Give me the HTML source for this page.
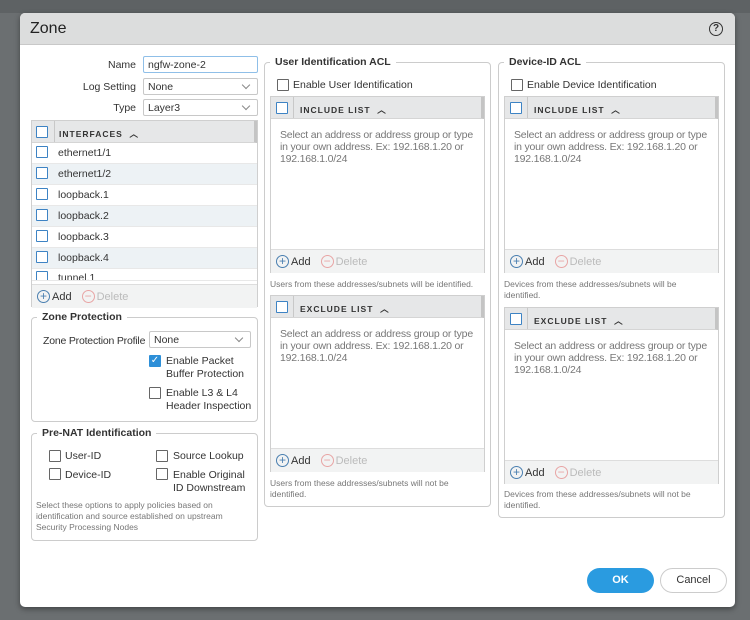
<!DOCTYPE html>
<html><head><meta charset="utf-8"><style>
*{box-sizing:border-box;margin:0;padding:0}
body{width:750px;height:620px;background:#6b6f71;font-family:"Liberation Sans",sans-serif;font-size:10.5px;color:#333;position:relative;overflow:hidden}
.a{position:absolute}
#dlg{left:20px;top:13px;width:715px;height:594px;background:#fff;border-radius:5px;overflow:hidden;box-shadow:0 2px 6px rgba(0,0,0,.4)}
#hd{left:0;top:0;width:715px;height:32px;background:#dcdddd;border-bottom:1px solid #c8c8c8}
.lbl{text-align:right;width:100px}
.inp{border:1px solid #c8c8c8;border-radius:2px;height:17px;padding:2px 4px;background:#fff}
.sel:after{content:"";position:absolute;right:8px;top:3px;width:5px;height:5px;border-right:1px solid #888;border-bottom:1px solid #888;transform:rotate(45deg)}
.cb{width:12px;height:12px;border:1.5px solid #3d83c4;border-radius:1px;background:#fff}
.cg{width:12px;height:12px;border:1px solid #666;border-radius:1px;background:#fff}
.tbl{border:1px solid #cfcfcf;background:#fff}
.th{background:#e6e7e8;height:22px;border-bottom:1px solid #d5d5d5;border-right:3px solid #c4c4c4;font-weight:bold;font-size:8.5px;letter-spacing:1px;color:#333}
.th .sep{position:absolute;left:22px;top:0;bottom:0;border-left:1px solid #c8c8c8}
.ft{background:#f2f3f3;border-top:1px solid #ddd;height:24px;font-size:11px;display:flex;align-items:center;padding-left:5px}
.ft .d{margin-left:10px;color:#bbb;display:flex;align-items:center}
.plus,.minus{display:inline-block;width:13px;height:13px;border:1px solid #4a7fb0;border-radius:50%;text-align:center;line-height:11px;font-size:12px;color:#4a7fb0;margin-right:2px}
.minus{border-color:#e8a5a5;color:#e8a5a5}
.fs{border:1px solid #ccc;border-radius:4px}
.lg{background:#fff;padding:0 5px;font-weight:bold;font-size:10.5px;color:#333}
.ph{color:#777;font-size:10.5px;line-height:12px;letter-spacing:-0.2px}
.note{color:#777;font-size:8.5px;line-height:11px}
.row{height:21px;border-bottom:1px solid #e8e8e8;line-height:20px;font-size:10.5px}
.alt{background:#edf2f5}
</style></head><body>
<div class="a" style="left:0;top:0;width:750px;height:13px;background:#5e6264"></div>
<div id="dlg" class="a">
<div id="hd" class="a"><div class="a" style="left:10px;top:7px;font-size:16px;color:#222">Zone</div>
<div class="a" style="left:689px;top:9px;width:14px;height:14px;border:1.5px solid #333;border-radius:50%;text-align:center;font-size:10px;line-height:11px;font-weight:bold">?</div></div>

<div class="a lbl" style="left:16px;top:46px">Name</div>
<div class="a inp" style="left:123px;top:43px;width:115px;border-color:#8fbfe8">ngfw-zone-2</div>
<div class="a lbl" style="left:16px;top:68px">Log Setting</div>
<div class="a inp sel" style="left:123px;top:65px;width:115px">None</div>
<div class="a lbl" style="left:16px;top:89px">Type</div>
<div class="a inp sel" style="left:123px;top:86px;width:115px">Layer3</div>

<div class="a tbl" style="left:11px;top:107px;width:227px;height:187px">
 <div class="a th" style="left:0;top:0;width:225px"><div class="a cb" style="left:4px;top:5px"></div><div class="sep"></div><div class="a" style="left:27px;top:7px">INTERFACES &nbsp;︿</div></div>
 <div class="a" style="left:0;top:22px;width:225px">
  <div class="row"><span class="cb" style="display:inline-block;margin:0 10px -2px 4px"></span>ethernet1/1</div>
  <div class="row alt"><span class="cb" style="display:inline-block;margin:0 10px -2px 4px"></span>ethernet1/2</div>
  <div class="row"><span class="cb" style="display:inline-block;margin:0 10px -2px 4px"></span>loopback.1</div>
  <div class="row alt"><span class="cb" style="display:inline-block;margin:0 10px -2px 4px"></span>loopback.2</div>
  <div class="row"><span class="cb" style="display:inline-block;margin:0 10px -2px 4px"></span>loopback.3</div>
  <div class="row alt"><span class="cb" style="display:inline-block;margin:0 10px -2px 4px"></span>loopback.4</div>
  <div class="row" style="height:12px;overflow:hidden;line-height:18px"><span class="cb" style="display:inline-block;margin:0 10px -2px 4px"></span>tunnel.1</div>
 </div>
 <div class="a ft" style="left:0;top:163px;width:225px"><span class="plus">+</span>Add<span class="d"><span class="minus">−</span>Delete</span></div>
</div>

<div class="a fs" style="left:11px;top:304px;width:227px;height:105px"></div>
<div class="a lg" style="left:17px;top:298px">Zone Protection</div>
<div class="a" style="left:23px;top:322px;letter-spacing:-0.2px">Zone Protection Profile</div>
<div class="a inp sel" style="left:129px;top:318px;width:102px">None</div>
<div class="a" style="left:129px;top:342px;width:12px;height:12px;background:#2d8fd8;border-radius:1px;color:#fff;font-size:10px;line-height:12px;text-align:center">✓</div>
<div class="a" style="left:146px;top:342px;line-height:13px">Enable Packet<br>Buffer Protection</div>
<div class="a cg" style="left:129px;top:374px"></div>
<div class="a" style="left:146px;top:374px;line-height:13px">Enable L3 &amp; L4<br>Header Inspection</div>

<div class="a fs" style="left:11px;top:420px;width:227px;height:108px"></div>
<div class="a lg" style="left:17px;top:414px">Pre-NAT Identification</div>
<div class="a cg" style="left:29px;top:437px"></div><div class="a" style="left:45px;top:437px">User-ID</div>
<div class="a cg" style="left:29px;top:455px"></div><div class="a" style="left:45px;top:456px">Device-ID</div>
<div class="a cg" style="left:136px;top:437px"></div><div class="a" style="left:153px;top:437px">Source Lookup</div>
<div class="a cg" style="left:136px;top:455px"></div><div class="a" style="left:153px;top:456px;line-height:13px">Enable Original<br>ID Downstream</div>
<div class="a note" style="left:16px;top:487px;width:215px">Select these options to apply policies based on identification and source established on upstream Security Processing Nodes</div>

<!-- User ID ACL -->
<div class="a fs" style="left:244px;top:49px;width:227px;height:445px"></div>
<div class="a lg" style="left:250px;top:43px">User Identification ACL</div>
<div class="a cg" style="left:257px;top:66px"></div><div class="a" style="left:273px;top:66px">Enable User Identification</div>
<div class="a tbl" style="left:250px;top:83px;width:215px;height:177px">
 <div class="a th" style="left:0;top:0;width:213px"><div class="a cb" style="left:5px;top:5px"></div><div class="sep"></div><div class="a" style="left:29px;top:7px">INCLUDE LIST &nbsp;︿</div></div>
 <div class="a ph" style="left:9px;top:32px;width:205px">Select an address or address group or type<br>in your own address. Ex: 192.168.1.20 or<br>192.168.1.0/24</div>
 <div class="a ft" style="left:0;top:152px;width:213px"><span class="plus">+</span>Add<span class="d"><span class="minus">−</span>Delete</span></div>
</div>
<div class="a note" style="left:250px;top:266px">Users from these addresses/subnets will be identified.</div>
<div class="a tbl" style="left:250px;top:282px;width:215px;height:177px">
 <div class="a th" style="left:0;top:0;width:213px"><div class="a cb" style="left:5px;top:5px"></div><div class="sep"></div><div class="a" style="left:29px;top:7px">EXCLUDE LIST &nbsp;︿</div></div>
 <div class="a ph" style="left:9px;top:32px;width:205px">Select an address or address group or type<br>in your own address. Ex: 192.168.1.20 or<br>192.168.1.0/24</div>
 <div class="a ft" style="left:0;top:152px;width:213px"><span class="plus">+</span>Add<span class="d"><span class="minus">−</span>Delete</span></div>
</div>
<div class="a note" style="left:250px;top:465px;width:210px">Users from these addresses/subnets will not be identified.</div>

<!-- Device ID ACL -->
<div class="a fs" style="left:478px;top:49px;width:227px;height:456px"></div>
<div class="a lg" style="left:484px;top:43px">Device-ID ACL</div>
<div class="a cg" style="left:491px;top:66px"></div><div class="a" style="left:507px;top:66px">Enable Device Identification</div>
<div class="a tbl" style="left:484px;top:83px;width:215px;height:177px">
 <div class="a th" style="left:0;top:0;width:213px"><div class="a cb" style="left:5px;top:5px"></div><div class="sep"></div><div class="a" style="left:29px;top:7px">INCLUDE LIST &nbsp;︿</div></div>
 <div class="a ph" style="left:9px;top:32px;width:205px">Select an address or address group or type<br>in your own address. Ex: 192.168.1.20 or<br>192.168.1.0/24</div>
 <div class="a ft" style="left:0;top:152px;width:213px"><span class="plus">+</span>Add<span class="d"><span class="minus">−</span>Delete</span></div>
</div>
<div class="a note" style="left:484px;top:266px;width:210px">Devices from these addresses/subnets will be identified.</div>
<div class="a tbl" style="left:484px;top:294px;width:215px;height:177px">
 <div class="a th" style="left:0;top:0;width:213px"><div class="a cb" style="left:5px;top:5px"></div><div class="sep"></div><div class="a" style="left:29px;top:7px">EXCLUDE LIST &nbsp;︿</div></div>
 <div class="a ph" style="left:9px;top:32px;width:205px">Select an address or address group or type<br>in your own address. Ex: 192.168.1.20 or<br>192.168.1.0/24</div>
 <div class="a ft" style="left:0;top:152px;width:213px"><span class="plus">+</span>Add<span class="d"><span class="minus">−</span>Delete</span></div>
</div>
<div class="a note" style="left:484px;top:476px;width:210px">Devices from these addresses/subnets will not be identified.</div>

<div class="a" style="left:567px;top:555px;width:67px;height:25px;background:#2a9be0;border-radius:13px;color:#fff;font-weight:bold;text-align:center;line-height:25px;font-size:11px">OK</div>
<div class="a" style="left:640px;top:555px;width:67px;height:25px;border:1px solid #ccc;border-radius:13px;text-align:center;line-height:23px;font-size:11px">Cancel</div>
</div>
</body></html>
